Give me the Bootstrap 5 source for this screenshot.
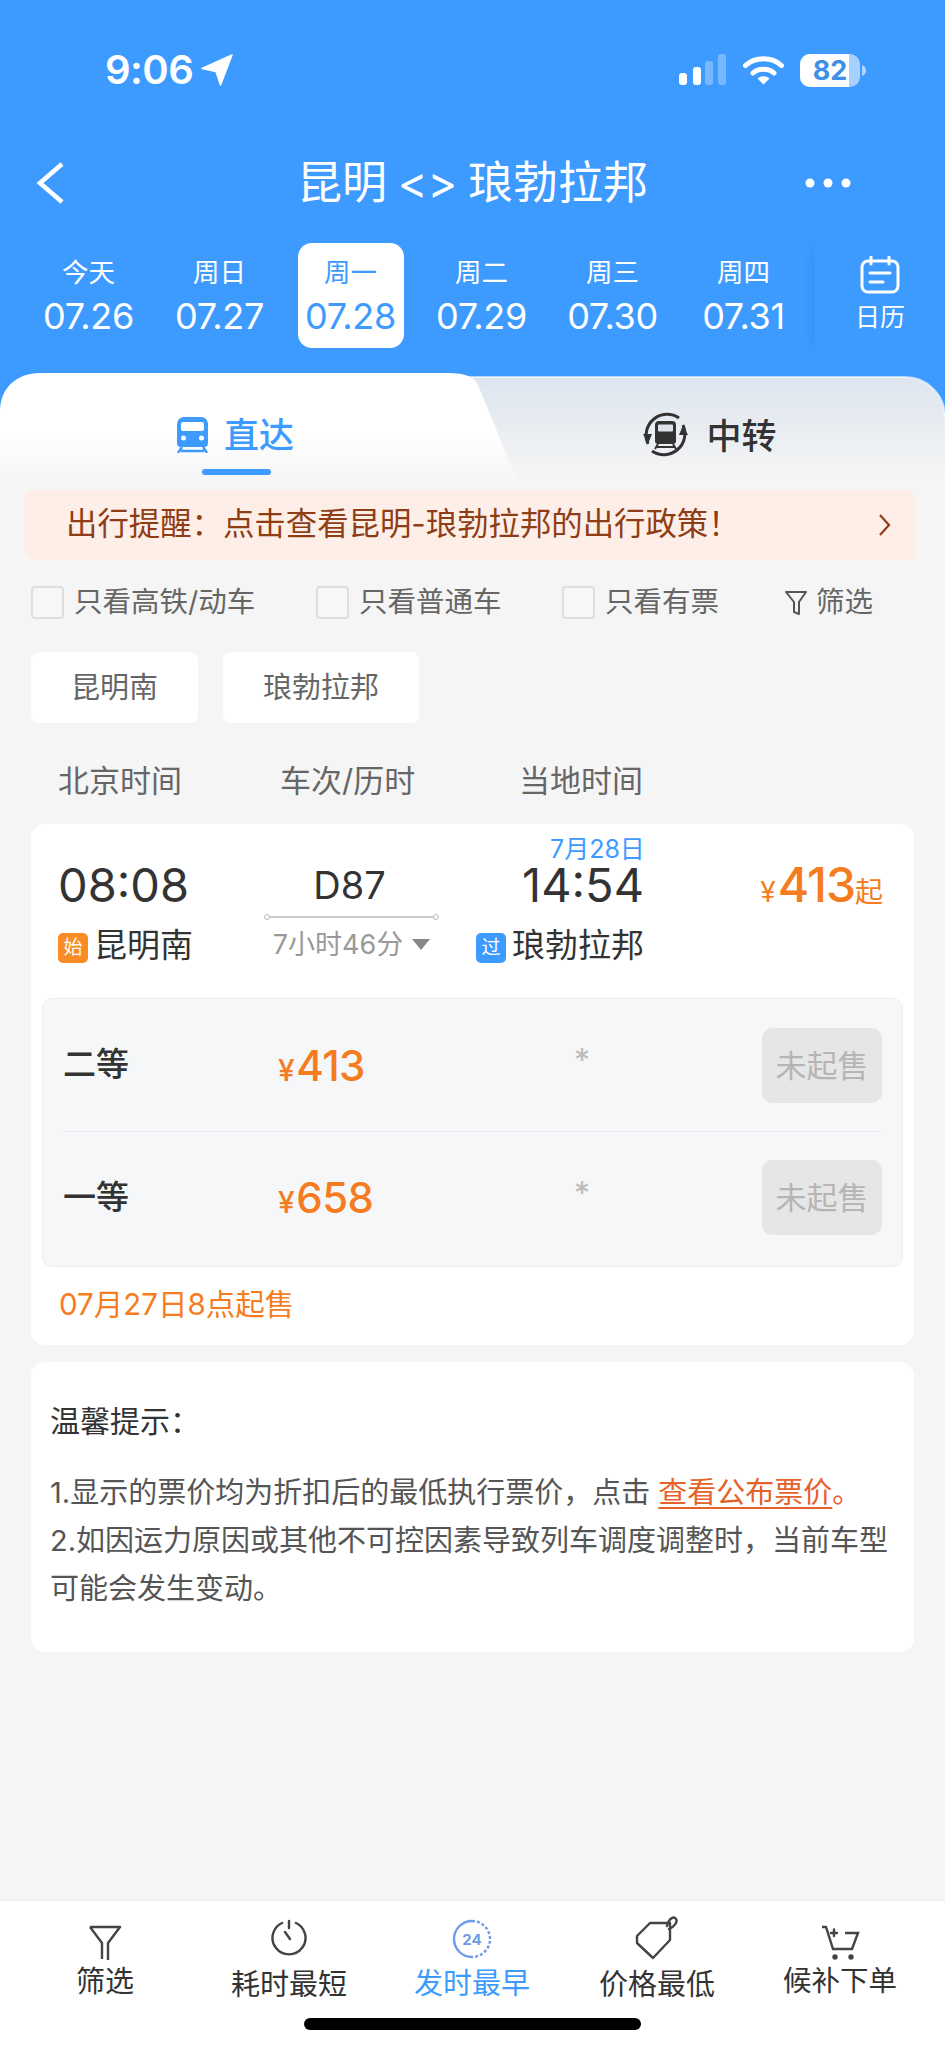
<!DOCTYPE html>
<html lang="zh-CN">
<head>
    <meta charset="UTF-8">
    <meta name="viewport" content="width=device-width, initial-scale=1.0">
    <title>昆明 - 琅勃拉邦</title>
    <link href="https://cdn.jsdelivr.net/npm/bootstrap@5.3.0/dist/css/bootstrap.min.css" rel="stylesheet">
    <style>
        body {
            margin: 0;
            width: 945px;
            background: #f5f5f5;
            color: #333;
            font-family: Inter, "Noto Sans CJK SC", sans-serif;
        }
        .app-page { height: 2048px; overflow: hidden; }

        /* header */
        .top-head { height: 373px; background: #3d9bff; color: #fff; position: relative; }
        .status-row { height: 141px; padding: 50px 78px 51px 105px; }
        .clock { font-size: 40px; font-weight: 600; line-height: 40px; letter-spacing: -.5px; }
        .title-row { height: 84px; }
        .title-side { width: 150px; }
        .title-back { padding-left: 36px; }
        .title-more { padding-right: 94px; text-align: right; }
        .title-text { font-size: 45px; line-height: 84px; word-spacing: -2px; }
        .date-row { margin-top: 18px; padding-left: 23px; }
        .date-cell { width: 131px; height: 105px; text-align: center; }
        .date-cell.on { color: #3d9bff; }
        .date-cell.on .date-pill { background: #fff; }
        .date-pill { width: 106px; height: 105px; margin: 0 auto; border-radius: 14px; padding-top: 14px; }
        .date-week { font-size: 26.5px; line-height: 30px; }
        .date-num { font-size: 36px; line-height: 44px; margin: 7px -5px 0; white-space: nowrap; letter-spacing: -.3px; }
        .cal-btn {
            position: absolute; right: 0; top: 243px; width: 130px; height: 110px;
            box-shadow: -8px 0 10px -6px rgba(30, 100, 190, .2);
            text-align: center; padding-top: 13px; background: #3d9bff;
        }
        .cal-btn div { font-size: 25px; line-height: 30px; margin-top: 8px; }

        /* tabs */
        .tab-wrap { height: 117px; position: relative; background: linear-gradient(#3d9bff 40px, #f5f5f5 40px); }
        .tab-art { position: absolute; left: 0; top: 0; }
        .tab-item { position: relative; height: 117px; width: 50%; padding-top: 44px; }
        .tab-item span { font-size: 35px; line-height: 36px; font-weight: 500; }
        .tab-go { color: #3d9bff; padding-left: 176px; gap: 15px; }
        .tab-swap { color: #333; padding-left: 168px; gap: 17px; padding-top: 37px; }
        .tab-line { position: absolute; left: 202px; top: 96px; width: 69px; height: 6px; border-radius: 3px; background: #3d9bff; }

        /* notice + filters */
        .notice-bar {
            margin: 0 28px 0 24px; height: 70px; padding: 0 26px 0 42px;
            background: #fdeee8; border-radius: 10px; color: #8f3d14;
            font-size: 31.4px;
        }
        .filter-row { height: 33px; margin-top: 26px; padding-left: 31px; font-size: 28.5px; color: #666; }
        .tick-box { width: 33px; height: 33px; border: 2px solid #dedede; border-radius: 4px; background: #f7f7f7; margin-right: 10px; }
        .filter-one { width: 285px; }
        .filter-two { width: 246px; }
        .filter-three { width: 222px; }
        .chip-row { margin-top: 33px; padding-left: 31px; gap: 25px; }
        .chip-box { height: 71px; background: #fff; border-radius: 8px; font-size: 29px; color: #666; padding: 0 40px; line-height: 71px; }
        .col-head { margin-top: 35px; height: 46px; padding-left: 58px; font-size: 31px; line-height: 46px; color: #666; }
        .col-a { width: 222px; }
        .col-b { width: 239px; }

        /* train card */
        .train-card { margin: 20px 31px 0; height: 521px; background: #fff; border-radius: 14px; position: relative; }
        .trip-head { height: 174px; position: relative; }
        .time-big { font-size: 47px; line-height: 44px; }
        .trip-from { position: absolute; left: 27px; top: 39px; }
        .trip-mid { position: absolute; left: 233px; top: 33px; width: 175px; text-align: center; }
        .trip-to { position: absolute; left: 443px; top: 39px; width: 170px; text-align: right; }
        .arrive-day { position: absolute; left: 519px; top: 13px; font-size: 25px; line-height: 24px; color: #3d9bff; }
        .train-no { font-size: 38px; line-height: 56px; margin-right: 4px; }
        .run-line { height: 2px; background: #ccc; margin-top: 3px; position: relative; }
        .run-line::before, .run-line::after { content: ""; position: absolute; top: -2px; width: 6px; height: 6px; border: 1px solid #bbb; border-radius: 50%; background: #fff; }
        .run-line::before { left: 0; }
        .run-line::after { right: 0; }
        .run-time { font-size: 27px; line-height: 34px; color: #999; margin: 10px -8px 0; white-space: nowrap; }
        .tri-down { display: inline-block; margin-left: 9px; width: 0; height: 0; border: 9px solid transparent; border-top: 11px solid #888; border-bottom: 0; vertical-align: 4px; }
        .stn-line { font-size: 33px; line-height: 44px; margin-top: 16px; white-space: nowrap; }
        .stn-tag { display: inline-block; width: 30px; height: 30px; border-radius: 5px; color: #fff; font-size: 19px; line-height: 30px; text-align: center; margin-right: 6px; vertical-align: 3px; }
        .stn-start { background: #f98c25; }
        .stn-pass { background: #3d9bff; }
        .price-top { position: absolute; right: 31px; top: 36px; color: #f57c20; line-height: 50px; white-space: nowrap; }
        .price-top b { font-size: 48px; font-weight: 500; letter-spacing: -1px; margin-left: 2px; }
        .price-top i { font-style: normal; font-size: 28px; }
        .seat-price i { font-style: normal; font-size: 30px; margin-right: 2px; }
        .seat-panel { margin: 0 11px; height: 269px; background: #f6f7f9; border: 1px solid #eceef2; border-radius: 10px; padding: 0 20px; }
        .seat-row { height: 132px; }
        .seat-row + .seat-row { border-top: 1px solid #e6e8ec; }
        .seat-name { width: 215px; font-size: 33px; font-weight: 500; color: #333; }
        .seat-price { width: 296px; color: #f57c20; font-size: 42px; font-weight: 500; letter-spacing: -.5px; }
        .seat-left { width: 188px; color: #bbb; font-size: 32px; padding-bottom: 8px; }
        .sale-btn { width: 120px; height: 75px; background: #e6e6e6; border-radius: 10px; color: #b5b5b5; font-size: 31px; line-height: 75px; text-align: center; white-space: nowrap; }
        .sale-note { color: #f57c20; font-size: 29.500px; line-height: 36px; margin: 19px 0 0 28px; }

        /* tips */
        .tip-card { margin: 17px 31px 0; height: 290px; background: #fff; border-radius: 14px; padding: 40px 19px 0; }
        .tip-title { font-size: 30px; line-height: 38px; color: #333; margin-bottom: 29px; }
        .tip-body { font-size: 29px; line-height: 48px; color: #555; white-space: nowrap; }
        .tip-link { color: #e5622a; }
        .tip-link u { text-underline-offset: 4px; }

        /* bottom bar */
        .foot-bar { margin-top: 247px; height: 150px; background: #fff; border-top: 2px solid #eee; position: relative; }
        .foot-cell { position: absolute; text-align: center; white-space: nowrap; color: #333; }
        .foot-cell svg { display: block; margin: 0 auto; }
        .foot-text { font-size: 29px; line-height: 36px; }
        .foot-text-a { margin-top: 3px; }
        .foot-text-b { margin-top: 10px; }
        .foot-text-c { margin-top: 7px; }
        .foot-text-d { margin-top: 7px; }
        .foot-text-e { margin-top: 2px; font-size: 28.500px; }
        .foot-on { color: #3d9bff; }
        .home-bar { position: absolute; left: 304px; top: 117px; width: 337px; height: 12px; border-radius: 6px; background: #000; }
    </style>
</head>
<body>
<div class="app-page">
    <div class="top-head">
        <div class="status-row d-flex align-items-center">
            <div class="clock">9:06</div>
            <svg class="ms-2" width="32" height="32" viewBox="0 0 32 32"><path d="M31 1 1 14.5 15 17.5 19.5 31Z" fill="#fff" stroke="#fff" stroke-width="1.5" stroke-linejoin="round"/></svg>
            <div class="ms-auto d-flex align-items-center">
                <svg width="48" height="32" viewBox="0 0 48 32">
                    <rect x="0" y="19" width="8" height="12" rx="3" fill="#fff"/>
                    <rect x="14" y="13" width="8" height="18" rx="3" fill="#fff"/>
                    <rect x="26" y="7" width="8" height="24" rx="3" fill="#fff" opacity=".3"/>
                    <rect x="39" y="0" width="8" height="31" rx="3" fill="#fff" opacity=".3"/>
                </svg>
                <svg class="ms-3" width="41" height="30" viewBox="0 0 41 30">
                    <path d="M2.5 10.5C12 1.5 29 1.5 38.5 10.5" fill="none" stroke="#fff" stroke-width="5" stroke-linecap="round"/>
                    <path d="M10 18c5.500-5 15.500-5 21 0" fill="none" stroke="#fff" stroke-width="5" stroke-linecap="round"/>
                    <path d="M14.500 23.500c3.500-3 8.500-3 12 0L20.500 29.500Z" fill="#fff"/>
                </svg>
                <svg class="ms-3" width="67" height="33" viewBox="0 0 67 33">
                    <rect x="0" y="0" width="60" height="33" rx="10" fill="#fff" opacity=".55"/>
                    <path d="M10 0H49V33H10A10 10 0 0 1 0 23V10A10 10 0 0 1 10 0Z" fill="#fff"/>
                    <path d="M62 11c3 1 4 3 4 5.500s-1 4.500-4 5.500Z" fill="#fff" opacity=".6"/>
                    <text x="30" y="26" text-anchor="middle" font-family="Inter" font-size="27" font-weight="700" fill="#3d8fe8">82</text>
                </svg>
            </div>
        </div>
        <div class="title-row d-flex align-items-center justify-content-between">
            <div class="title-side title-back d-flex"><svg width="28" height="42" viewBox="0 0 28 42"><path d="M26 2 4 21 26 40" fill="none" stroke="#fff" stroke-width="4.500"/></svg></div>
            <div class="title-text">昆明 &lt;&gt; 琅勃拉邦</div>
            <div class="title-side title-more d-flex justify-content-end"><svg width="46" height="10" viewBox="0 0 46 10"><circle cx="5" cy="5" r="4.500" fill="#fff"/><circle cx="23" cy="5" r="4.500" fill="#fff"/><circle cx="41" cy="5" r="4.500" fill="#fff"/></svg></div>
        </div>
        <div class="date-row d-flex">
            <div class="date-cell"><div class="date-pill"><div class="date-week">今天</div><div class="date-num">07.26</div></div></div>
            <div class="date-cell"><div class="date-pill"><div class="date-week">周日</div><div class="date-num">07.27</div></div></div>
            <div class="date-cell on"><div class="date-pill"><div class="date-week">周一</div><div class="date-num">07.28</div></div></div>
            <div class="date-cell"><div class="date-pill"><div class="date-week">周二</div><div class="date-num">07.29</div></div></div>
            <div class="date-cell"><div class="date-pill"><div class="date-week">周三</div><div class="date-num">07.30</div></div></div>
            <div class="date-cell"><div class="date-pill"><div class="date-week">周四</div><div class="date-num">07.31</div></div></div>
        </div>
        <div class="cal-btn">
            <svg width="40" height="38" viewBox="0 0 40 38" fill="none" stroke="#fff" stroke-width="3">
                <rect x="2" y="5" width="36" height="31" rx="6"/>
                <path d="M11 1v7M29 1v7" stroke-linecap="round"/>
                <path d="M10 17h20M10 26h13" stroke-linecap="round"/>
            </svg>
            <div>日历</div>
        </div>
    </div>

    <div class="tab-wrap">
        <svg class="tab-art" width="945" height="117" viewBox="0 0 945 117">
            <defs>
                <linearGradient id="tabRight" gradientUnits="userSpaceOnUse" x1="0" y1="4" x2="0" y2="105"><stop offset="0" stop-color="#dde5ef"/><stop offset="1" stop-color="#f5f5f5"/></linearGradient>
                <linearGradient id="tabLeft" gradientUnits="userSpaceOnUse" x1="0" y1="60" x2="0" y2="112"><stop offset="0" stop-color="#fff"/><stop offset="1" stop-color="#f5f5f5"/></linearGradient>
            </defs>
            <path d="M0 117V44A40 40 0 0 1 40 4H905A40 40 0 0 1 945 44V117Z" fill="url(#tabRight)"/>
            <path d="M435 4H905A40 40 0 0 1 945 44" fill="none" stroke="#fff" stroke-opacity=".6" stroke-width="2"/>
            <path d="M0 117V38C0 14 18 0 40 0H448C466 0 474 4 478 12L521 117Z" fill="url(#tabLeft)"/>
        </svg>
        <div class="d-flex">
            <div class="tab-item tab-go d-flex">
                <svg width="33" height="36" viewBox="0 0 33 36">
                    <path d="M8 0H25A7 7 0 0 1 32 7V26A4 4 0 0 1 28 30H5A4 4 0 0 1 1 26V7A7 7 0 0 1 8 0Z" fill="#3d9bff"/>
                    <rect x="5" y="5" width="23" height="9" rx="2" fill="#fff"/>
                    <circle cx="7.500" cy="21" r="2.500" fill="#fff"/><circle cx="25.500" cy="21" r="2.500" fill="#fff"/>
                    <path d="M6 30 2 36M27 30l4 6M5 34h23" stroke="#3d9bff" stroke-width="2.500" fill="none"/>
                </svg>
                <span>直达</span>
            </div>
            <div class="tab-item tab-swap d-flex align-items-start">
                <svg width="49" height="49" viewBox="0 0 49 49" fill="none">
                    <path d="M7 34A21 21 0 0 1 38 8" stroke="#333" stroke-width="3"/>
                    <path d="M42 15A21 21 0 0 1 11 41" stroke="#333" stroke-width="3"/>
                    <path d="M2 24h9l-4 10zM47 25h-9l4-10z" fill="#333"/>
                    <path d="M18 11H31A4 4 0 0 1 35 15V31A3 3 0 0 1 32 34H17A3 3 0 0 1 14 31V15A4 4 0 0 1 18 11Z" fill="#333"/>
                    <rect x="17" y="14.500" width="15" height="7" rx="1" fill="#dde3ea"/>
                    <path d="M17 34l-3 5M32 34l3 5M16 37h17" stroke="#333" stroke-width="2"/>
                </svg>
                <span class="mt-2">中转</span>
            </div>
        </div>
        <div class="tab-line"></div>
    </div>

    <div class="notice-bar d-flex align-items-center justify-content-between">
        <div>出行提醒&#xFF1A;点击查看昆明-琅勃拉邦的出行政策&#xFF01;</div>
        <svg width="13" height="24" viewBox="0 0 13 24"><path d="M2 2 11 12 2 22" fill="none" stroke="#8f3d14" stroke-width="2.200"/></svg>
    </div>

    <div class="filter-row d-flex align-items-center">
        <div class="filter-one d-flex align-items-center"><div class="tick-box"></div>只看高铁/动车</div>
        <div class="filter-two d-flex align-items-center"><div class="tick-box"></div>只看普通车</div>
        <div class="filter-three d-flex align-items-center"><div class="tick-box"></div>只看有票</div>
        <div class="d-flex align-items-center gap-2">
            <svg width="24" height="26" viewBox="0 0 24 26"><path d="M2 2H22L15 12V24L10 22V12Z" fill="none" stroke="#555" stroke-width="2" stroke-linejoin="round"/></svg>
            筛选
        </div>
    </div>

    <div class="chip-row d-flex">
        <div class="chip-box">昆明南</div>
        <div class="chip-box">琅勃拉邦</div>
    </div>

    <div class="col-head d-flex">
        <div class="col-a">北京时间</div>
        <div class="col-b">车次/历时</div>
        <div>当地时间</div>
    </div>

    <div class="train-card">
        <div class="trip-head">
            <div class="arrive-day">7月28日</div>
            <div class="trip-from">
                <div class="time-big">08:08</div>
                <div class="stn-line"><span class="stn-tag stn-start">始</span>昆明南</div>
            </div>
            <div class="trip-mid">
                <div class="train-no">D87</div>
                <div class="run-line"></div>
                <div class="run-time">7小时46分<span class="tri-down"></span></div>
            </div>
            <div class="trip-to">
                <div class="time-big">14:54</div>
                <div class="stn-line"><span class="stn-tag stn-pass">过</span>琅勃拉邦</div>
            </div>
            <div class="price-top"><i>¥</i><b>413</b><i>起</i></div>
        </div>
        <div class="seat-panel">
            <div class="seat-row d-flex align-items-center">
                <div class="seat-name">二等</div>
                <div class="seat-price"><i>¥</i>413</div>
                <div class="seat-left">*</div>
                <div class="sale-btn">未起售</div>
            </div>
            <div class="seat-row d-flex align-items-center">
                <div class="seat-name">一等</div>
                <div class="seat-price"><i>¥</i>658</div>
                <div class="seat-left">*</div>
                <div class="sale-btn">未起售</div>
            </div>
        </div>
        <div class="sale-note">07月27日8点起售</div>
    </div>

    <div class="tip-card">
        <div class="tip-title">温馨提示&#xFF1A;</div>
        <div class="tip-body">
            1.显示的票价均为折扣后的最低执行票价&#xFF0C;点击 <span class="tip-link"><u>查看公布票价</u>。</span><br>
            2.如因运力原因或其他不可控因素导致列车调度调整时&#xFF0C;当前车型<br>
            可能会发生变动。
        </div>
    </div>

    <div class="foot-bar">
        <div class="foot-cell" style="left:76px;top:24px">
            <svg width="34" height="36" viewBox="0 0 34 36"><path d="M2 2H32L20 18V35M14 34V18L2 2" fill="none" stroke="#444" stroke-width="2.400" stroke-linejoin="round"/></svg>
            <div class="foot-text foot-text-a">筛选</div>
        </div>
        <div class="foot-cell" style="left:231px;top:18px">
            <svg width="38" height="38" viewBox="0 0 38 38" fill="none" stroke="#444" stroke-width="2.400"><path d="M13 3.500A16.500 16.500 0 1 0 25 3.500"/><path d="M19 2V9M15 13l5 7" stroke-linecap="round"/></svg>
            <div class="foot-text foot-text-b">耗时最短</div>
        </div>
        <div class="foot-cell foot-on" style="left:414px;top:18px">
            <svg width="40" height="40" viewBox="0 0 40 40" fill="none">
                <path d="M20 2A18 18 0 0 0 20 38" stroke="#6f9be8" stroke-width="2.400"/>
                <path d="M20 2A18 18 0 0 1 20 38" stroke="#6f9be8" stroke-width="2.400" stroke-dasharray="3 2"/>
                <text x="20" y="26" text-anchor="middle" font-family="Inter" font-size="15" font-weight="700" fill="#6f9be8">24</text>
            </svg>
            <div class="foot-text foot-text-c">发时最早</div>
        </div>
        <div class="foot-cell" style="left:599px;top:15px">
            <svg width="46" height="44" viewBox="0 0 46 44" fill="none" stroke="#444" stroke-width="2.400" stroke-linejoin="round"><path d="M16 7H36V24L19 42 3 27V20Z"/><path d="M35 13C40 11 44 6 42 3 40 0 35 2 33 10" stroke-linecap="round"/></svg>
            <div class="foot-text foot-text-d">价格最低</div>
        </div>
        <div class="foot-cell" style="left:783px;top:24px">
            <svg width="40" height="36" viewBox="0 0 40 36" fill="none" stroke="#444" stroke-width="2.400"><path d="M2 2H6L13 24H32L38 8H25"/><path d="M17 8H11M14 4.500V11" stroke-linecap="round"/><circle cx="15" cy="32" r="1.500" fill="#444"/><circle cx="31" cy="32" r="1.500" fill="#444"/></svg>
            <div class="foot-text foot-text-e">候补下单</div>
        </div>
        <div class="home-bar"></div>
    </div>
</div>
<script src="https://cdn.jsdelivr.net/npm/bootstrap@5.3.0/dist/js/bootstrap.bundle.min.js"></script>
</body>
</html>
